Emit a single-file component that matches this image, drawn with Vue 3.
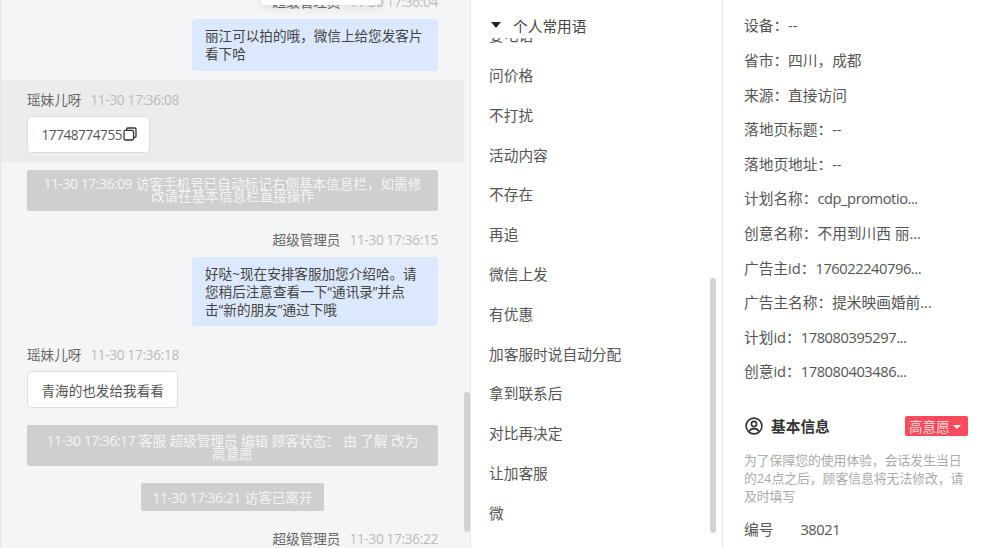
<script setup>
const items = ['问价格','不打扰','活动内容','不存在','再追','微信上发','有优惠','加客服时说自动分配','拿到联系后','对比再决定','让加客服','微']
const info = [
  ['设备：','--'],['省市：','四川，成都'],['来源：','直接访问'],['落地页标题：','--'],['落地页地址：','--'],
  ['计划名称：','cdp_promotio...'],['创意名称：','不用到川西 丽...'],['广告主id：','176022240796...'],
  ['广告主名称：','提米映画婚前...'],['计划id：','178080395297...'],['创意id：','178080403486...']
]
const isLatin = (v) => /[a-z0-9]/.test(v)
</script>

<template>
  <div class="page">
    <section class="chat">
      <div class="tip"></div>
      <div class="flow">
        <div class="meta right"><span class="name">超级管理员</span><span class="time">11-30 17:36:04</span></div>
        <div class="bubble short">丽江可以拍的哦，微信上给您发客片看下哈</div>
        <div class="hl">
          <div class="meta"><span class="name">瑶妹儿呀</span><span class="time">11-30 17:36:08</span></div>
          <div class="card c1"><span class="tight">17748774755</span><svg class="copy" width="14" height="14" viewBox="0 0 14 14" fill="none" stroke="#333" stroke-width="1.3"><rect x="1" y="3.4" width="9.6" height="9.6" rx="1.4"/><path d="M3.6 3.2V2.2A1.2 1.2 0 0 1 4.8 1h7a1.2 1.2 0 0 1 1.2 1.2v7a1.2 1.2 0 0 1-1.2 1.2h-1"/></svg></div>
        </div>
        <div class="sys s1"><span class="tight3">11-30 17:36:09</span> 访客手机号已自动标记右侧基本信息栏，如需修改请在基本信息栏直接操作</div>
        <div class="meta right m2"><span class="name">超级管理员</span><span class="time">11-30 17:36:15</span></div>
        <div class="bubble long">好哒~现在安排客服加您介绍哈。请您稍后注意查看一下“通讯录”并点击“新的朋友”通过下哦</div>
        <div class="meta m3"><span class="name">瑶妹儿呀</span><span class="time">11-30 17:36:18</span></div>
        <div class="card c2">青海的也发给我看看</div>
        <div class="sys s2"><span class="tight3">11-30 17:36:17</span> 客服 超级管理员 编辑 顾客状态： 由 了解 改为 高意愿</div>
        <div class="sys s3"><span class="tight3">11-30 17:36:21</span> 访客已离开</div>
        <div class="meta right m4"><span class="name">超级管理员</span><span class="time">11-30 17:36:22</span></div>
      </div>
      <div class="bar chat-bar"></div>
    </section>

    <section class="phrases">
      <div class="head"><i class="caret"></i><span>个人常用语</span></div>
      <ul class="list">
        <li class="clipped">要电话</li>
        <li v-for="t in items" :key="t">{{ t }}</li>
      </ul>
      <div class="bar list-bar"></div>
    </section>

    <section class="side">
      <div v-for="r in info" :key="r[0]" class="row">{{ r[0] }}<span :class="{ tight2: isLatin(r[1]) }">{{ r[1] }}</span></div>
      <div class="title">
        <svg width="18" height="18" viewBox="0 0 18 18" fill="none" stroke="#333" stroke-width="1.6"><circle cx="9" cy="9" r="7.9"/><circle cx="9" cy="7" r="2.6"/><path d="M3.9 14.6C5 12.4 6.8 11.6 9 11.6s4 .8 5.1 3"/></svg>
        <strong>基本信息</strong>
        <span class="tag">高意愿<i></i></span>
      </div>
      <p class="note">为了保障您的使用体验，会话发生当日的24点之后，顾客信息将无法修改，请及时填写</p>
      <div class="num"><span>编号</span><span class="tight">38021</span></div>
    </section>
  </div>
</template>

<style scoped>
.page {
  display: flex;
  width: 982px;
  height: 548px;
  overflow: hidden;
  background: #fff;
  font-family: "Open Sans", "Noto Sans CJK SC", sans-serif;
  color: #555;
}
.tight { letter-spacing: -.45px; }
.tight2 { letter-spacing: -.45px; }
.tight3 { letter-spacing: -.3px; }
.chat {
  position: relative;
  flex: 0 0 471px;
  box-sizing: border-box;
  height: 548px;
  overflow: hidden;
  background: #f4f5f7;
  border-left: 1px solid #e6e6e6;
  border-right: 1px solid #e6e6e6;
  font-size: 13.6px;
}
.flow {
  display: flex;
  flex-direction: column;
  margin-top: -8px;
  width: 463px;
}
.tip {
  position: absolute;
  left: 260px;
  top: -10px;
  width: 119px;
  height: 15px;
  border-radius: 4px;
  background: #fff;
  box-shadow: 0 2px 10px rgba(0, 0, 0, .1);
  z-index: 2;
}
.meta {
  display: flex;
  gap: 9px;
  height: 20px;
  line-height: 20px;
  padding: 0 26px;
  flex: none;
}
.meta.right { justify-content: flex-end; }
.name { color: #666; }
.time { color: #bbb; letter-spacing: -.3px; }
.bubble {
  box-sizing: border-box;
  align-self: flex-end;
  width: 246px;
  margin: 7px 26px 0 0;
  padding: 8px 13px 7px;
  border-radius: 4px;
  background: #dce8fd;
  color: #444;
  line-height: 18.3px;
}
.hl {
  margin-top: 9px;
  height: 82px;
  box-sizing: border-box;
  padding-top: 10px;
  background: #ececec;
}
.card {
  box-sizing: border-box;
  display: inline-flex;
  align-items: center;
  height: 37px;
  margin: 6px 0 0 26px;
  padding: 0 13.5px;
  background: #fff;
  border: 1px solid #ddd;
  border-radius: 4px;
  color: #555;
}
.c1 { width: 123px; padding-right: 0; }
.copy { flex: none; margin-left: 1px; }
.c2 { align-self: flex-start; margin-top: 6px; }
.sys {
  box-sizing: border-box;
  align-self: center;
  padding: 8px 16px;
  border-radius: 2px;
  background: #cfcfcf;
  color: #f4f4f4;
  text-align: center;
  line-height: 12.6px;
}
.s1, .s2 { width: 411px; height: 41px; }
.s1 { margin-top: 8px; }
.m2 { margin-top: 19px; }
.m3 { margin-top: 19px; }
.s2 { margin-top: 17px; padding-top: 10px; }
.s3 { margin-top: 17px; height: 28px; width: 183px; line-height: 13px; white-space: nowrap; padding-left: 0; padding-right: 0; }
.m4 { margin-top: 18px; }
.bar {
  position: absolute;
  width: 6px;
  border-radius: 3px;
  background: #d2d2d2;
}
.chat-bar { left: 463px; top: 392px; height: 140px; }
.phrases {
  position: relative;
  flex: 0 0 251px;
  height: 548px;
  overflow: hidden;
  font-size: 14.7px;
}
.head {
  position: absolute;
  inset: 0 0 auto 0;
  display: flex;
  align-items: center;
  height: 38px;
  padding: 12px 0 0 20px;
  box-sizing: border-box;
  background: #fff;
  color: #444;
}
.caret {
  width: 0;
  height: 0;
  margin: 0 12px 0 0;
  border: 5px solid transparent;
  border-top: 6px solid #222;
  border-bottom: 0;
}
.list {
  list-style: none;
  margin: 16.2px 0 0;
  padding: 0 0 0 18px;
}
.list li { height: 39.8px; line-height: 39.8px; }
.list-bar { left: 239px; top: 278px; height: 255px; }
.side {
  flex: 1;
  box-sizing: border-box;
  height: 548px;
  overflow: hidden;
  padding: 8.4px 14px 0 21px;
  border-left: 1px solid #e6e6e6;
  font-size: 14.7px;
}
.row { height: 34.6px; line-height: 34.6px; white-space: nowrap; }
.title {
  display: flex;
  align-items: center;
  height: 20px;
  margin-top: 26.8px;
  padding-left: 1px;
}
.title strong {
  margin-left: 8px;
  color: #333;
  font-weight: 700;
}
.tag {
  display: flex;
  align-items: center;
  height: 20px;
  margin-left: auto;
  padding: 0 4px 0 4px;
  border-radius: 2px;
  background: #fb4a5b;
  color: #fdd;
  font-size: 13.6px;
  width: 63px;
  box-sizing: border-box;
}
.tag i {
  margin: 2px 0 0 3px;
  border: 4px solid transparent;
  border-top: 4px solid #fff;
  border-bottom: 0;
}
.note {
  margin: 15px 0 0;
  font-size: 12.8px;
  line-height: 18px;
  color: #aaa;
}
.num {
  display: flex;
  gap: 27px;
  margin-top: 14px;
  line-height: 20px;
}
</style>

<style>
html, body { margin: 0; overflow: hidden; background: #fff; }
</style>
